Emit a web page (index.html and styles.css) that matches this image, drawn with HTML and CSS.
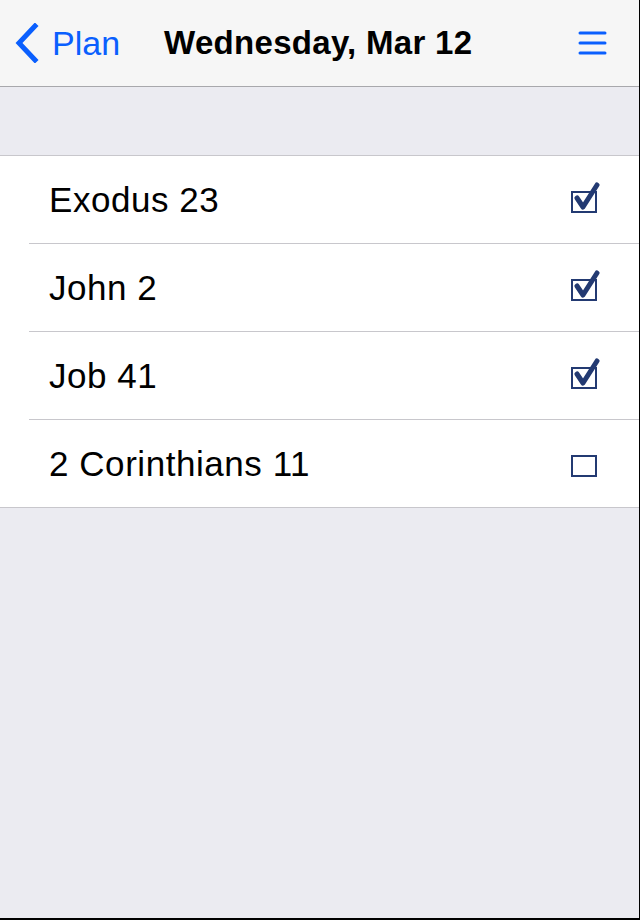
FILE: index.html
```html
<!DOCTYPE html>
<html>
<head>
<meta charset="utf-8">
<link rel="stylesheet" href="styles.css">
</head>
<body>
<div class="app">
  <header class="navbar">
    <a class="back">
      <svg class="chev" width="28" height="40" viewBox="0 0 28 40"><path d="M22 3 L6 20 L22 37" fill="none" stroke="#0a5ffe" stroke-width="5" stroke-linecap="square" stroke-linejoin="miter"/></svg>
      <span>Plan</span>
    </a>
    <h1 class="title">Wednesday, Mar 12</h1>
    <svg class="menu" width="30" height="26" viewBox="0 0 30 26"><g stroke="#0a5ffe" stroke-width="3" stroke-linecap="round"><line x1="2" y1="3" x2="27" y2="3"/><line x1="2" y1="13" x2="27" y2="13"/><line x1="2" y1="23" x2="27" y2="23"/></g></svg>
  </header>
  <div class="spacer"></div>
  <ul class="list">
    <li class="row"><span class="label">Exodus 23</span><span class="check"><svg width="30" height="32" viewBox="0 0 30 32"><rect x="2" y="10" width="24" height="20" fill="none" stroke="#233a72" stroke-width="2"/><path d="M7 16 L13 25 L27 3" fill="none" stroke="#233a72" stroke-width="5" stroke-linecap="round" stroke-linejoin="round"/></svg></span></li>
    <li class="row"><span class="label">John 2</span><span class="check"><svg width="30" height="32" viewBox="0 0 30 32"><rect x="2" y="10" width="24" height="20" fill="none" stroke="#233a72" stroke-width="2"/><path d="M7 16 L13 25 L27 3" fill="none" stroke="#233a72" stroke-width="5" stroke-linecap="round" stroke-linejoin="round"/></svg></span></li>
    <li class="row"><span class="label">Job 41</span><span class="check"><svg width="30" height="32" viewBox="0 0 30 32"><rect x="2" y="10" width="24" height="20" fill="none" stroke="#233a72" stroke-width="2"/><path d="M7 16 L13 25 L27 3" fill="none" stroke="#233a72" stroke-width="5" stroke-linecap="round" stroke-linejoin="round"/></svg></span></li>
    <li class="row"><span class="label">2 Corinthians 11</span><span class="check"><svg width="30" height="32" viewBox="0 0 30 32"><rect x="2" y="10" width="24" height="20" fill="none" stroke="#233a72" stroke-width="2"/></svg></span></li>
  </ul>
</div>
</body>
</html>
```

FILE: styles.css
```css
html, body {
  margin: 0;
  padding: 0;
  background: #000;
}
body {
  width: 640px;
  height: 920px;
  overflow: hidden;
  font-family: "Liberation Sans", Arial, sans-serif;
}
.app {
  width: 639px;
  height: 918px;
  background: #ebebf1;
  display: flex;
  flex-direction: column;
}
.navbar {
  height: 86px;
  background: #f6f6f6;
  border-bottom: 1px solid #a8a8ac;
  display: flex;
  align-items: center;
  box-sizing: content-box;
}
.back {
  display: flex;
  align-items: center;
  color: #0a5ffe;
  font-size: 34px;
  margin-left: 13px;
  gap: 11px;
}
.chev {
  display: block;
}
.title {
  margin: 0 0 0 44px;
  font-size: 33px;
  font-weight: bold;
  color: #000;
  letter-spacing: 0.3px;
}
.menu {
  margin-left: auto;
  margin-right: 31px;
  display: block;
}
.spacer {
  height: 68px;
  border-bottom: 1px solid #c8c7cc;
}
.list {
  list-style: none;
  margin: 0;
  padding: 0 0 0 29px;
  background: #fff;
  border-bottom: 1px solid #c8c7cc;
}
.row {
  height: 87px;
  display: flex;
  align-items: center;
  border-bottom: 1px solid #c8c7cc;
  padding-right: 39px;
}
.row:last-child {
  border-bottom: none;
}
.label {
  font-size: 35px;
  color: #000;
  margin-left: 20px;
  letter-spacing: 0.55px;
}
.check {
  margin-left: auto;
  display: block;
}
.check svg {
  display: block;
  margin-top: -4px;
}
```
